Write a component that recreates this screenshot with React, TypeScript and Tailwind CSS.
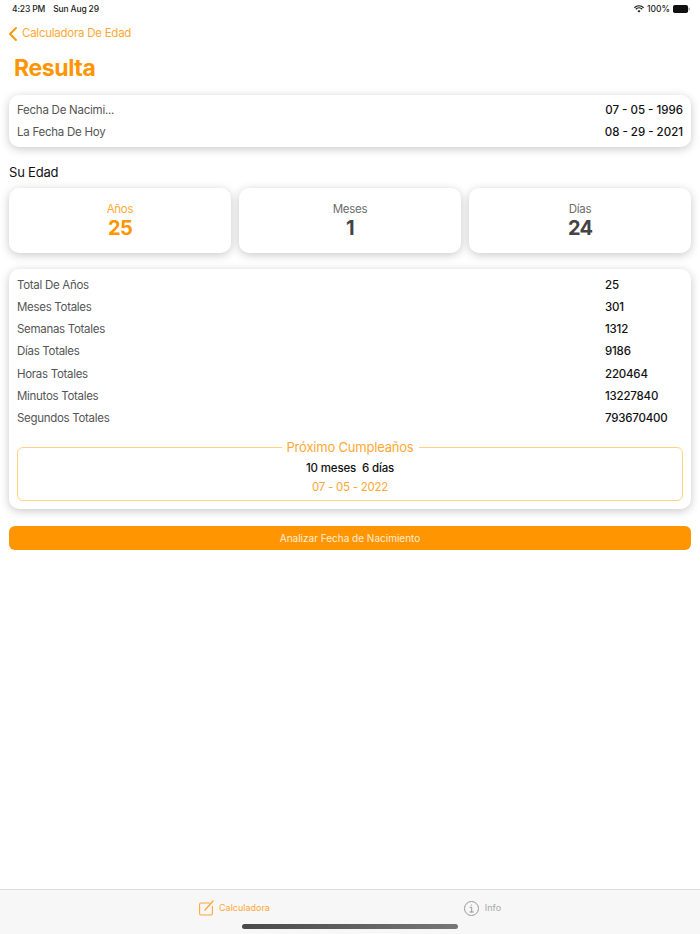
const font = { fontFamily: "Inter, 'Liberation Sans', sans-serif" };

const totals: [string, string][] = [
  ["Total De Años", "25"],
  ["Meses Totales", "301"],
  ["Semanas Totales", "1312"],
  ["Días Totales", "9186"],
  ["Horas Totales", "220464"],
  ["Minutos Totales", "13227840"],
  ["Segundos Totales", "793670400"],
];

function StatCard({ label, value, active }: { label: string; value: string; active?: boolean }) {
  return (
    <div className="flex-1 h-[65px] bg-white rounded-[10px] shadow-[0_2px_10px_rgba(0,0,0,0.22)] flex flex-col items-center pt-[14px]">
      <div className={`text-[11.5px] tracking-[-0.25px] leading-[15px] ${active ? "text-[#ffa733]" : "text-[#6b6b6b]"}`}>{label}</div>
      <div className={`text-[20px] tracking-[-0.8px] leading-[23px] font-bold ${active ? "text-[#ff9500]" : "text-[#444444]"}`}>{value}</div>
    </div>
  );
}

export default function App() {
  return (
    <div className="w-[700px] h-[934px] bg-white flex flex-col overflow-hidden" style={font}>
      <div className="h-[18px] pl-3 pr-[10px] flex items-center justify-between text-[8.5px] font-medium text-[#222222] shrink-0">
        <div className="flex gap-[8px] tracking-[-0.15px]">
          <span>4:23 PM</span>
          <span>Sun Aug 29</span>
        </div>
        <div className="flex items-center gap-[3px]">
          <svg width="10" height="8" viewBox="0 0 16 12" fill="#111111">
            <path d="M8 11.5 5.6 9a3.4 3.4 0 0 1 4.8 0L8 11.5ZM3.6 7 2.2 5.5a8.2 8.2 0 0 1 11.6 0L12.4 7a6.2 6.2 0 0 0-8.8 0ZM1.3 4.6 0 3.2a11.3 11.3 0 0 1 16 0l-1.3 1.4a9.4 9.4 0 0 0-13.4 0Z" />
          </svg>
          <span>100%</span>
          <svg width="17" height="8" viewBox="0 0 17 8">
            <rect x="0" y="0" width="15" height="8" rx="1.8" fill="#111111" />
            <rect x="15.5" y="2.5" width="1.2" height="3" rx="0.6" fill="#999999" />
          </svg>
        </div>
      </div>

      <div className="h-[32px] pl-[9px] flex items-center gap-[5px] text-[#ffa733] text-[11.5px] tracking-[-0.25px] shrink-0">
        <svg width="8" height="14" viewBox="0 0 8 14" fill="none" stroke="#ff9500" strokeWidth="1.8" strokeLinecap="round" strokeLinejoin="round">
          <path d="M7 1 1 7l6 6" />
        </svg>
        <span>Calculadora De Edad</span>
      </div>

      <div className="h-[36px] mb-[9px] pl-[14px] flex items-center text-[23px] font-bold text-[#ff9500] shrink-0 tracking-[-0.4px]">Resulta</div>

      <div className="px-[9px] flex flex-col shrink-0">
        <div className="h-[52px] bg-white rounded-[10px] shadow-[0_2px_10px_rgba(0,0,0,0.22)] px-2 flex flex-col justify-center gap-[4px] text-[11.5px] leading-[18px]">
          <div className="flex justify-between">
            <span className="text-[#555555] tracking-[-0.25px]">Fecha De Nacimi...</span>
            <span className="text-[#111111] font-medium">07 - 05 - 1996</span>
          </div>
          <div className="flex justify-between">
            <span className="text-[#555555] tracking-[-0.25px]">La Fecha De Hoy</span>
            <span className="text-[#111111] font-medium">08 - 29 - 2021</span>
          </div>
        </div>

        <div className="mt-[16px] h-[20px] flex items-center text-[13px] tracking-[-0.2px] text-[#111111]">Su Edad</div>

        <div className="mt-[5px] flex gap-2">
          <StatCard label="Años" value="25" active />
          <StatCard label="Meses" value="1" />
          <StatCard label="Días" value="24" />
        </div>

        <div className="mt-[16px] h-[240px] bg-white rounded-[10px] shadow-[0_2px_10px_rgba(0,0,0,0.22)] px-2 pt-[5.4px]">
          <div className="flex flex-col">
            {totals.map(([k, v]) => (
              <div key={k} className="h-[22.2px] flex items-center text-[11.5px] tracking-[-0.3px]">
                <span className="flex-1 text-[#555555]">{k}</span>
                <span className="w-[78px] text-[#111111] font-medium tracking-[-0.2px]">{v}</span>
              </div>
            ))}
          </div>
          <fieldset className="mt-[9.6px] h-[62px] border border-[#ffd27f] rounded-[6px] flex flex-col items-center">
            <legend className="mx-auto px-[5px] text-[13px] tracking-[-0.2px] leading-[16px] text-[#ffa733]">Próximo Cumpleaños</legend>
            <div className="w-full text-center text-[11.5px] tracking-[-0.15px] leading-[16px] font-medium text-[#111111] mt-[5px] whitespace-pre">10 meses  6 días</div>
            <div className="w-full text-center text-[11.5px] tracking-[-0.25px] leading-[16px] text-[#ffa733] mt-[2.6px]">07 - 05 - 2022</div>
          </fieldset>
        </div>

        <div className="mt-[17px] h-[24px] bg-[#ff9500] rounded-[6px] flex items-center justify-center text-[10px] text-[#ffeeda]">
          Analizar Fecha de Nacimiento
        </div>
      </div>

      <div className="mt-auto h-[45px] bg-[#f7f7f7] border-t border-[#dddddd] relative flex gap-[194px] pl-[199px] pt-[10px] shrink-0">
        <div className="flex items-center gap-[5px] h-[16px] text-[9px] text-[#ffa733]">
          <svg width="15" height="16" viewBox="0 0 15 16" fill="none" stroke="#ffa733" strokeWidth="1.1" strokeLinecap="round" strokeLinejoin="round">
            <path d="M10.5 3H2a1.4 1.4 0 0 0-1.4 1.4v9.2A1.4 1.4 0 0 0 2 15h10a1.4 1.4 0 0 0 1.4-1.4V6.5" />
            <path d="M14 1 6 10" strokeWidth="1.3" />
          </svg>
          <span>Calculadora</span>
        </div>
        <div className="flex items-center gap-[6px] h-[16px] text-[9px] text-[#a6a6a6]">
          <svg width="15" height="15" viewBox="0 0 15 15" fill="none" stroke="#8e8e8e" strokeWidth="0.9">
            <circle cx="7.5" cy="7.5" r="7" />
            <path d="M6 6.3h1.7v4.6M5.8 11h3.6" strokeLinecap="round" />
            <circle cx="7.5" cy="4" r="0.6" fill="#8e8e8e" stroke="none" />
          </svg>
          <span>Info</span>
        </div>
        <div className="absolute left-[242px] top-[34px] w-[216px] h-[5px] rounded-full bg-linear-to-r from-[#4a4a4a] to-[#777777]" />
      </div>
    </div>
  );
}
